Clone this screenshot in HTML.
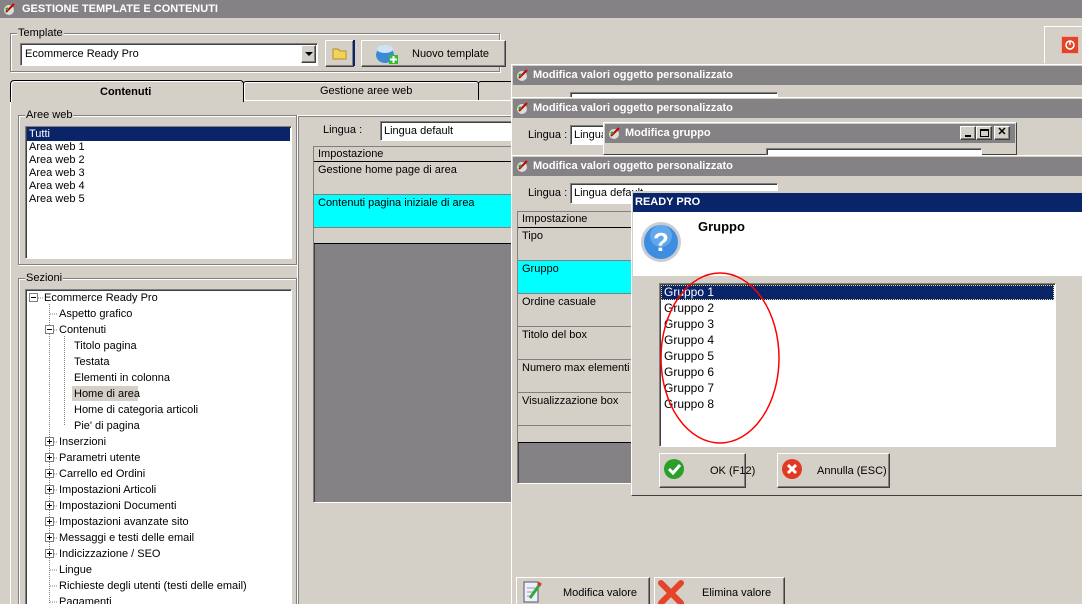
<!DOCTYPE html>
<html><head><meta charset="utf-8"><style>
*{margin:0;padding:0;box-sizing:border-box}
html{width:1082px;height:604px;overflow:hidden}
body{width:1082px;height:604px;overflow:hidden;background:#d4d0c8;font:12px "Liberation Sans",sans-serif;color:#000;position:relative}
.a{position:absolute}
.tb{position:absolute;background:#858286;color:#fff;font-weight:bold;font-size:11px;line-height:18px;padding-left:20px;white-space:nowrap;overflow:hidden}
.ic{position:absolute;left:3px;top:3px;width:14px;height:12px}
.sunk{border:1px solid;border-color:#808080 #fff #fff #808080;box-shadow:inset 1px 1px 0 #404040}
.rais{border:1px solid;border-color:#fff #404040 #404040 #fff;box-shadow:inset -1px -1px 0 #808080;background:#d4d0c8}
.grp{border:1px solid #808080;box-shadow:1px 1px 0 #fff, inset 1px 1px 0 #fff}
.lbl{position:absolute;background:#d4d0c8;padding:0 1px;font-size:11px;line-height:12px}
.t{position:absolute;font-size:11px;line-height:13px;white-space:nowrap}
.row{position:absolute;left:0;right:0;border-bottom:1px solid #808080;font-size:11px;padding:2px 4px;white-space:nowrap;overflow:hidden}
</style></head><body>

<div class="tb" style="left:0;top:0;width:1082px;height:18px;padding-left:22px">GESTIONE TEMPLATE E CONTENUTI<svg class="ic" viewBox="0 0 14 12"><circle cx="6" cy="7" r="5" fill="#ddd"/><path d="M3 9l8-8" stroke="#c00" stroke-width="2"/><circle cx="4" cy="6" r="1.5" fill="#2a2"/></svg></div>

<div class="a grp" style="left:10px;top:33px;width:490px;height:39px"></div>
<div class="lbl" style="left:17px;top:27px">Template</div>
<div class="a sunk" style="left:20px;top:43px;width:298px;height:23px;background:#fff"></div>
<div class="t" style="left:25px;top:48px">Ecommerce Ready Pro</div>
<div class="a rais" style="left:301px;top:45px;width:15px;height:18px"><div class="a" style="left:3px;top:6px;border:4px solid transparent;border-top:4px solid #000"></div></div>
<div class="a rais" style="left:325px;top:40px;width:29px;height:27px"><svg class="a" style="left:6px;top:5px" width="16" height="14"><path d="M1 3h5l2 2h6v8H1z" fill="#f2d35a" stroke="#b89020"/></svg></div>
<div class="a" style="left:353px;top:40px;width:2px;height:26px;background:#0a246a"></div>
<div class="a rais" style="left:361px;top:40px;width:145px;height:27px"><svg class="a" style="left:12px;top:2px" width="26" height="22"><ellipse cx="11" cy="12" rx="9" ry="8" fill="#3a8ad8"/><ellipse cx="11" cy="6" rx="8" ry="4" fill="#cfe3f5"/><rect x="15" y="12" width="9" height="9" fill="#3b3"/><path d="M19.5 13v7M16 16.5h7" stroke="#fff" stroke-width="2"/></svg><div class="t" style="left:50px;top:7px">Nuovo template</div></div>

<div class="a" style="left:1044px;top:26px;width:40px;height:37px;border-left:1px solid #fff;border-top:1px solid #fff"></div>
<div class="a" style="left:1061px;top:36px;width:18px;height:18px;background:#e0452a;border:1px solid #f3b0a0"><svg width="16" height="16"><circle cx="8" cy="8" r="4" fill="none" stroke="#fff" stroke-width="1.5"/><path d="M8 4v4" stroke="#fff" stroke-width="1.5"/></svg></div>

<div class="a" style="left:243px;top:81px;width:236px;height:20px;border:1px solid #000;border-bottom:none;background:#d4d0c8;border-radius:3px 3px 0 0;box-shadow:inset 1px 1px 0 #fff"></div>
<div class="t" style="left:320px;top:85px">Gestione aree web</div>
<div class="a" style="left:478px;top:81px;width:40px;height:20px;border:1px solid #000;border-bottom:none;border-radius:3px 0 0 0"></div>
<div class="a" style="left:10px;top:100px;width:502px;height:504px;border-left:1px solid #fff;border-top:1px solid #fff"></div>
<div class="a" style="left:10px;top:80px;width:234px;height:22px;border:1px solid #000;border-bottom:none;background:#d4d0c8;border-radius:4px 4px 0 0;box-shadow:inset 1px 1px 0 #fff"></div>
<div class="t" style="left:100px;top:86px;font-weight:bold">Contenuti</div>

<div class="a grp" style="left:18px;top:115px;width:279px;height:150px"></div>
<div class="lbl" style="left:25px;top:109px">Aree web</div>
<div class="a sunk" style="left:25px;top:126px;width:267px;height:133px;background:#fff"></div>
<div class="a" style="left:27px;top:127px;width:263px;height:14px;background:#0a246a"></div>
<div class="t" style="left:29px;top:128px;color:#fff">Tutti</div>
<div class="t" style="left:29px;top:141px">Area web 1</div>
<div class="t" style="left:29px;top:154px">Area web 2</div>
<div class="t" style="left:29px;top:167px">Area web 3</div>
<div class="t" style="left:29px;top:180px">Area web 4</div>
<div class="t" style="left:29px;top:193px">Area web 5</div>

<div class="a grp" style="left:18px;top:278px;width:279px;height:340px"></div>
<div class="lbl" style="left:25px;top:272px">Sezioni</div>
<div class="a sunk" style="left:25px;top:289px;width:267px;height:330px;background:#fff"></div>
<svg class="a" style="left:25px;top:289px" width="40" height="315">
<g stroke="#808080" stroke-dasharray="1 1" fill="none">
<path d="M24.5 15v300M39.5 47v90M13 9h5M25 25h8M25 41h8M25 153h8M25 169h8M25 185h8M25 201h8M25 217h8M25 233h8M25 249h8M25 265h8M25 281h8M25 297h8M25 313h8M40 57h7M40 73h7M40 89h7M40 105h7M40 121h7M40 137h7"/></g>
<g fill="#fff" stroke="#808080"><rect x="4.5" y="4.5" width="8" height="8"/><rect x="20.5" y="36.5" width="8" height="8"/>
<rect x="20.5" y="148.5" width="8" height="8"/><rect x="20.5" y="164.5" width="8" height="8"/><rect x="20.5" y="180.5" width="8" height="8"/><rect x="20.5" y="196.5" width="8" height="8"/><rect x="20.5" y="212.5" width="8" height="8"/><rect x="20.5" y="228.5" width="8" height="8"/><rect x="20.5" y="244.5" width="8" height="8"/><rect x="20.5" y="260.5" width="8" height="8"/></g>
<g stroke="#000"><path d="M6 8.5h5M22 40.5h5M22 152.5h5M24.5 150v5M22 168.5h5M24.5 166v5M22 184.5h5M24.5 182v5M22 200.5h5M24.5 198v5M22 216.5h5M24.5 214v5M22 232.5h5M24.5 230v5M22 248.5h5M24.5 246v5M22 264.5h5M24.5 262v5"/></g>
</svg>
<div class="a" style="left:72px;top:386px;width:66px;height:15px;background:#d4d0c8"></div>
<div class="t" style="left:44px;top:292px">Ecommerce Ready Pro</div>
<div class="t" style="left:59px;top:308px">Aspetto grafico</div>
<div class="t" style="left:59px;top:324px">Contenuti</div>
<div class="t" style="left:74px;top:340px">Titolo pagina</div>
<div class="t" style="left:74px;top:356px">Testata</div>
<div class="t" style="left:74px;top:372px">Elementi in colonna</div>
<div class="t" style="left:74px;top:388px">Home di area</div>
<div class="t" style="left:74px;top:404px">Home di categoria articoli</div>
<div class="t" style="left:74px;top:420px">Pie' di pagina</div>
<div class="t" style="left:59px;top:436px">Inserzioni</div>
<div class="t" style="left:59px;top:452px">Parametri utente</div>
<div class="t" style="left:59px;top:468px">Carrello ed Ordini</div>
<div class="t" style="left:59px;top:484px">Impostazioni Articoli</div>
<div class="t" style="left:59px;top:500px">Impostazioni Documenti</div>
<div class="t" style="left:59px;top:516px">Impostazioni avanzate sito</div>
<div class="t" style="left:59px;top:532px">Messaggi e testi delle email</div>
<div class="t" style="left:59px;top:548px">Indicizzazione / SEO</div>
<div class="t" style="left:59px;top:564px">Lingue</div>
<div class="t" style="left:59px;top:580px">Richieste degli utenti (testi delle email)</div>
<div class="t" style="left:59px;top:596px">Pagamenti</div>

<div class="a" style="left:297px;top:115px;width:220px;height:489px;border-left:1px solid #fff;border-top:1px solid #fff;box-shadow:inset 1px 1px 0 #808080"></div>
<div class="t" style="left:323px;top:124px">Lingua :</div>
<div class="a sunk" style="left:380px;top:121px;width:135px;height:20px;background:#fff"></div>
<div class="t" style="left:384px;top:125px">Lingua default</div>
<div class="a sunk" style="left:313px;top:146px;width:205px;height:357px;background:#858286;overflow:hidden">
<div class="row" style="top:0;height:15px;background:#d4d0c8;border-bottom-color:#000;padding-top:1px">Impostazione</div>
<div class="row" style="top:15px;height:33px;background:#d4d0c8">Gestione home page di area</div>
<div class="row" style="top:48px;height:33px;background:#00ffff">Contenuti pagina iniziale di area</div>
<div class="row" style="top:81px;height:16px;background:#d4d0c8;border-bottom-color:#000"></div>
</div>

<div class="a" style="left:511px;top:64px;width:571px;height:40px;background:#d4d0c8;border-left:1px solid #fff;border-top:1px solid #fff"></div>
<div class="tb" style="left:513px;top:66px;width:569px;height:19px">Modifica valori oggetto personalizzato<svg class="ic" viewBox="0 0 14 12"><circle cx="6" cy="7" r="5" fill="#ddd"/><path d="M3 9l8-8" stroke="#c00" stroke-width="2"/><circle cx="4" cy="6" r="1.5" fill="#2a2"/></svg></div>
<div class="a sunk" style="left:570px;top:92px;width:208px;height:8px;background:#fff"></div>
<div class="a" style="left:511px;top:97px;width:571px;height:60px;background:#d4d0c8;border-left:1px solid #fff;border-top:1px solid #fff"></div>
<div class="tb" style="left:513px;top:99px;width:569px;height:19px">Modifica valori oggetto personalizzato<svg class="ic" viewBox="0 0 14 12"><circle cx="6" cy="7" r="5" fill="#ddd"/><path d="M3 9l8-8" stroke="#c00" stroke-width="2"/><circle cx="4" cy="6" r="1.5" fill="#2a2"/></svg></div>
<div class="t" style="left:528px;top:129px">Lingua :</div>
<div class="a sunk" style="left:570px;top:125px;width:40px;height:20px;background:#fff"></div>
<div class="t" style="left:574px;top:129px">Lingua</div>
<div class="a" style="left:603px;top:122px;width:414px;height:33px;background:#d4d0c8;border:1px solid;border-color:#fff #404040 #404040 #fff"></div>
<div class="tb" style="left:605px;top:124px;width:410px;height:19px">Modifica gruppo<svg class="ic" viewBox="0 0 14 12"><circle cx="6" cy="7" r="5" fill="#ddd"/><path d="M3 9l8-8" stroke="#c00" stroke-width="2"/><circle cx="4" cy="6" r="1.5" fill="#2a2"/></svg>
<div class="a rais" style="left:355px;top:2px;width:16px;height:14px"><div class="a" style="left:4px;top:8px;width:6px;height:2px;background:#000"></div></div>
<div class="a rais" style="left:371px;top:2px;width:16px;height:14px"><div class="a" style="left:3px;top:2px;width:9px;height:8px;border:1px solid #000;border-top-width:2px"></div></div>
<div class="a rais" style="left:389px;top:2px;width:16px;height:14px;color:#000;font-size:11px;line-height:11px;text-align:center">✕</div></div>
<div class="a sunk" style="left:766px;top:148px;width:216px;height:8px;background:#fff"></div>
<div class="a" style="left:511px;top:155px;width:571px;height:449px;background:#d4d0c8;border-left:1px solid #fff;border-top:1px solid #fff"></div>
<div class="tb" style="left:513px;top:157px;width:569px;height:19px">Modifica valori oggetto personalizzato<svg class="ic" viewBox="0 0 14 12"><circle cx="6" cy="7" r="5" fill="#ddd"/><path d="M3 9l8-8" stroke="#c00" stroke-width="2"/><circle cx="4" cy="6" r="1.5" fill="#2a2"/></svg></div>
<div class="t" style="left:528px;top:187px">Lingua :</div>
<div class="a sunk" style="left:570px;top:183px;width:208px;height:21px;background:#fff"></div>
<div class="t" style="left:574px;top:187px">Lingua default</div>
<div class="a sunk" style="left:517px;top:211px;width:125px;height:273px;background:#858286;overflow:hidden">
<div class="row" style="top:0;height:16px;background:#d4d0c8;border-bottom-color:#000;padding-top:1px">Impostazione</div>
<div class="row" style="top:16px;height:33px;background:#d4d0c8">Tipo</div>
<div class="row" style="top:49px;height:33px;background:#00ffff">Gruppo</div>
<div class="row" style="top:82px;height:33px;background:#d4d0c8">Ordine casuale</div>
<div class="row" style="top:115px;height:33px;background:#d4d0c8">Titolo del box</div>
<div class="row" style="top:148px;height:33px;background:#d4d0c8">Numero max elementi e</div>
<div class="row" style="top:181px;height:33px;background:#d4d0c8">Visualizzazione box</div>
<div class="row" style="top:214px;height:17px;background:#d4d0c8;border-bottom-color:#000"></div>
</div>
<div class="a rais" style="left:516px;top:577px;width:134px;height:30px"><svg class="a" style="left:5px;top:2px" width="20" height="24"><rect x="2" y="2" width="14" height="20" fill="#eef" stroke="#556"/><path d="M5 8h8M5 12h8M5 16h6" stroke="#99a"/><path d="M8 18l10-14" stroke="#3a3" stroke-width="3"/><path d="M16 3l3 2" stroke="#d33" stroke-width="3"/></svg><div class="t" style="left:46px;top:9px">Modifica valore</div></div>
<div class="a rais" style="left:654px;top:577px;width:131px;height:30px"><svg class="a" style="left:3px;top:2px" width="26" height="26"><path d="M3 3l20 20M23 3L3 23" stroke="#e5442a" stroke-width="6" stroke-linecap="round"/></svg><div class="t" style="left:47px;top:9px">Elimina valore</div></div>

<div class="a" style="left:631px;top:191px;width:460px;height:305px;background:#d4d0c8;border:1px solid;border-color:#d4d0c8 #404040 #404040 #fff"></div>
<div class="a" style="left:633px;top:193px;width:449px;height:19px;background:#0a246a;color:#fff;font-weight:bold;font-size:11px;line-height:19px;padding-left:2px">READY PRO</div>
<div class="a" style="left:633px;top:212px;width:449px;height:64px;background:#fff"></div>
<svg class="a" style="left:638px;top:219px" width="46" height="46"><circle cx="23" cy="23" r="20" fill="#c8ccd4"/><circle cx="23" cy="23" r="17" fill="#3d8ee0"/><circle cx="23" cy="17" r="11" fill="#7cb8f0" opacity=".6"/><text x="23" y="32" text-anchor="middle" font-family="Liberation Sans" font-weight="bold" font-size="26" fill="#fff">?</text></svg>
<div class="t" style="left:698px;top:219px;font-weight:bold;font-size:13px;line-height:15px">Gruppo</div>
<div class="a sunk" style="left:659px;top:283px;width:397px;height:164px;background:#fff"></div>
<div class="a" style="left:661px;top:285px;width:393px;height:15px;background:#0a246a;outline:1px dotted #e8d88a;outline-offset:-1px"></div>
<div class="t" style="left:664px;top:286px;color:#fff;font-size:12px">Gruppo 1</div>
<div class="t" style="left:664px;top:302px;font-size:12px">Gruppo 2</div>
<div class="t" style="left:664px;top:318px;font-size:12px">Gruppo 3</div>
<div class="t" style="left:664px;top:334px;font-size:12px">Gruppo 4</div>
<div class="t" style="left:664px;top:350px;font-size:12px">Gruppo 5</div>
<div class="t" style="left:664px;top:366px;font-size:12px">Gruppo 6</div>
<div class="t" style="left:664px;top:382px;font-size:12px">Gruppo 7</div>
<div class="t" style="left:664px;top:398px;font-size:12px">Gruppo 8</div>
<div class="a rais" style="left:659px;top:453px;width:87px;height:35px"><svg class="a" style="left:3px;top:4px" width="22" height="22"><circle cx="11" cy="11" r="10" fill="#2aa02a"/><path d="M6 11l4 4 7-8" stroke="#fff" stroke-width="3" fill="none"/></svg><div class="t" style="left:50px;top:11px">OK (F12)</div></div>
<div class="a rais" style="left:777px;top:453px;width:113px;height:35px"><svg class="a" style="left:3px;top:4px" width="22" height="22"><circle cx="11" cy="11" r="10" fill="#e03a22"/><path d="M7 7l8 8M15 7l-8 8" stroke="#fff" stroke-width="3"/></svg><div class="t" style="left:39px;top:11px">Annulla (ESC)</div></div>

<svg class="a" style="left:0;top:0" width="1082" height="604"><ellipse cx="720" cy="358" rx="59" ry="85" fill="none" stroke="#f00" stroke-width="1.5"/></svg>
</body></html>
